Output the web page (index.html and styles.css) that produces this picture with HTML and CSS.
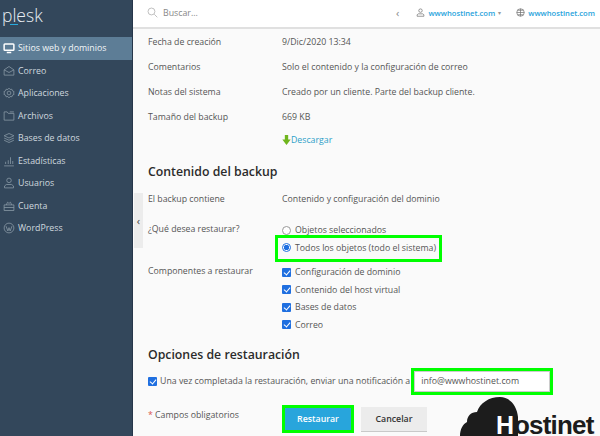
FILE: index.html
```html
<!DOCTYPE html>
<html lang="es">
<head>
    <meta charset="UTF-8">
    <title>Plesk - Restaurar backup</title>
    <link rel="stylesheet" href="styles.css">
</head>
<body>
    <aside class="sidebar">
        <div class="logo">plesk<span class="logo-bar"></span></div>
        <nav class="nav">
            <a class="nav-item active">
                <svg viewBox="0 0 16 16"><rect x="1.5" y="2.5" width="13" height="8.5" rx="1" fill="none" stroke-width="2"/><path d="M5 14h6" stroke-width="2"/></svg>
                Sitios web y dominios
            </a>
            <a class="nav-item">
                <svg viewBox="0 0 16 16"><path d="M1.5 6.5 8 2l6.5 4.500v7h-13zM1.5 6.500 8 10l6.500-3.500"/></svg>
                Correo
            </a>
            <a class="nav-item">
                <svg viewBox="0 0 16 16"><circle cx="8" cy="8" r="2.500"/><path d="M8 1.500l1.500 1.800 2.300-.3.900 2.200 2.100 1-.7 1.800.7 1.800-2.100 1-.9 2.200-2.300-.3L8 14.500l-1.500-1.800-2.300.3-.9-2.200-2.100-1 .7-1.800-.7-1.800 2.100-1 .9-2.200 2.300.3z"/></svg>
                Aplicaciones
            </a>
            <a class="nav-item">
                <svg viewBox="0 0 16 16"><path d="M1.500 2.500h4l1.500 2h7.500v9h-13zM9 2.500h5.500"/></svg>
                Archivos
            </a>
            <a class="nav-item">
                <svg viewBox="0 0 16 16"><path d="M8 2l6.500 3L8 8 1.500 5zM1.500 8 8 11l6.500-3M1.500 11 8 14l6.500-3"/></svg>
                Bases de datos
            </a>
            <a class="nav-item">
                <svg viewBox="0 0 16 16"><path d="M1.500 14.500h13M3.500 12V9M7 12V7M10 12V3M13 12V8"/></svg>
                Estadísticas
            </a>
            <a class="nav-item">
                <svg viewBox="0 0 16 16"><circle cx="8" cy="4.500" r="3"/><path d="M2 14.500v-2.500l2.500-2h7l2.500 2v2.500z"/></svg>
                Usuarios
            </a>
            <a class="nav-item">
                <svg viewBox="0 0 16 16"><path d="M1.500 6.500h13v7.500h-13zM1.500 10h13M4.500 6.500 6 3l2 1.500L10 3l1.500 3.500"/></svg>
                Cuenta
            </a>
            <a class="nav-item">
                <svg viewBox="0 0 16 16"><circle cx="8" cy="8" r="6.500"/><path d="M4 5.500 6.500 12 8 7.500 9.500 12 12 5.500"/></svg>
                WordPress
            </a>
        </nav>
    </aside>

    <div class="main">
        <header class="topbar">
            <svg class="search-icon" viewBox="0 0 16 16"><circle cx="6.500" cy="6.500" r="5"/><path d="M10.500 10.500 15 15"/></svg>
            <span class="search-text">Buscar...</span>
            <span class="top-chevron">‹</span>
            <svg class="top-icon" viewBox="0 0 12 12"><circle cx="6" cy="3.500" r="2.300"/><path d="M1.500 11V9l1.500-1.200h6L10.500 9v2z"/></svg>
            <a class="top-link">wwwhostinet.com</a>
            <span class="caret">▾</span>
            <svg class="top-icon globe" viewBox="0 0 12 12"><circle cx="6" cy="6" r="5"/><path d="M1 6h10M6 1v10M2.500 3h7M2.500 9h7"/></svg>
            <a class="top-link">wwwhostinet.com</a>
        </header>

        <div class="side-toggle">‹</div>

        <main class="content">
            <div class="row"><div class="label">Fecha de creación</div><div class="value">9/Dic/2020 13:34</div></div>
            <div class="row"><div class="label">Comentarios</div><div class="value">Solo el contenido y la configuración de correo</div></div>
            <div class="row"><div class="label">Notas del sistema</div><div class="value">Creado por un cliente. Parte del backup cliente.</div></div>
            <div class="row"><div class="label">Tamaño del backup</div><div class="value">669 KB</div></div>
            <div class="row download-row"><div class="label"></div><div class="value download">
                <svg viewBox="0 0 10 12"><path d="M3 0h4v5.500h3L5 12 0 5.500h3z"/></svg>
                <a>Descargar</a>
            </div></div>

            <h2 class="heading first">Contenido del backup</h2>
            <div class="row tight"><div class="label">El backup contiene</div><div class="value">Contenido y configuración del dominio</div></div>

            <div class="row restore">
                <div class="label">¿Qué desea restaurar?</div>
                <div class="value options">
                    <label class="option"><span class="radio"></span>Objetos seleccionados</label>
                    <label class="option"><span class="radio on"></span>Todos los objetos (todo el sistema)<span class="mark radio-mark"></span></label>
                </div>
            </div>

            <div class="row components">
                <div class="label">Componentes a restaurar</div>
                <div class="value options">
                    <label class="option"><span class="check"></span>Configuración de dominio</label>
                    <label class="option"><span class="check"></span>Contenido del host virtual</label>
                    <label class="option"><span class="check"></span>Bases de datos</label>
                    <label class="option"><span class="check"></span>Correo</label>
                </div>
            </div>

            <h2 class="heading second">Opciones de restauración</h2>
            <div class="notify">
                <span class="check"></span>
                <span class="notify-text">Una vez completada la restauración, enviar una notificación a</span>
                <span class="email">info@wwwhostinet.com</span>
            </div>

            <div class="actions">
                <div class="required"><span class="star">*</span> Campos obligatorios</div>
                <button class="btn primary">Restaurar</button>
                <button class="btn">Cancelar</button>
            </div>
        </main>
    </div>

    <div class="brand">
        <svg class="cloud" viewBox="0 0 60 39"><path d="M0 39C0 32 3 27 7 25 7 19 11 15 17 15 20 6 29 0 40 0 50 0 57 9 58 20V39z"/></svg>
        <span class="brand-h">H</span><span class="brand-rest">ostinet</span>
    </div>
</body>
</html>
```

FILE: styles.css
```css
* {
    box-sizing: border-box;
}

html, body {
    height: 100%;
}

body {
    margin: 0;
    display: flex;
    height: 436px;
    overflow: hidden;
    position: relative;
    background: #fafafa;
    font-family: "Open Sans", sans-serif;
    font-size: 8.750px;
    color: #555;
}

/* sidebar */
.sidebar {
    width: 133px;
    flex-shrink: 0;
    background: #33475b;
    border-right: 1px solid #26364a;
    color: #d5dde4;
}

.logo {
    position: relative;
    height: 37px;
    padding: 0 0 0 2px;
    font-size: 17.500px;
    font-weight: 300;
    line-height: 31px;
    color: #e8eef3;
}

.logo-bar {
    position: absolute;
    left: 10px;
    top: 24px;
    width: 8px;
    height: 1px;
    background: #28aade;
}

.nav-item {
    display: flex;
    align-items: center;
    gap: 3px;
    height: 22.500px;
    padding-left: 3px;
    font-size: 8.800px;
    color: #cfd8df;
}

.nav-item svg {
    width: 12px;
    height: 12px;
    fill: none;
    stroke: #8d9daa;
    stroke-width: 1;
}

.nav-item.active {
    background: #5d7d96;
    color: #f2f6f8;
}

.nav-item.active svg {
    stroke: #fff;
}

/* main */
.main {
    flex: 1;
    min-width: 0;
}

.topbar {
    display: flex;
    align-items: center;
    height: 29px;
    padding: 0 5px 2px 14px;
    background: #fff;
    border-bottom: 2px solid #e0e0e0;
}

.search-icon {
    width: 11px;
    height: 11px;
    fill: none;
    stroke: #a5a5a5;
    stroke-width: 1;
}

.search-text {
    margin-left: 5px;
    font-size: 8.800px;
    color: #888;
    flex: 1;
}

.top-chevron {
    margin-right: 17px;
    color: #888;
    font-size: 11px;
}

.top-icon {
    width: 9px;
    height: 9px;
    margin-right: 3px;
    fill: none;
    stroke: #777;
    stroke-width: 1;
}

.top-icon.globe {
    margin-left: 15px;
    margin-right: 3px;
}

.top-link {
    font-size: 7.600px;
    font-weight: 600;
    color: #29a3dc;
}

.caret {
    margin-left: 3px;
    color: #999;
    font-size: 6px;
}

.side-toggle {
    position: absolute;
    left: 134px;
    top: 193px;
    width: 9px;
    height: 55px;
    display: flex;
    align-items: center;
    justify-content: center;
    background: #ececec;
    color: #444;
    font-size: 11px;
}

.content {
    padding: 5px 0 0 15px;
}

.row {
    display: flex;
    min-height: 25px;
    padding-top: 1px;
    line-height: 14px;
}

.row.download-row {
    min-height: 24px;
}

.label {
    width: 134px;
    flex-shrink: 0;
}

.download {
    display: flex;
    align-items: center;
    gap: 0;
    height: 10px;
}

.download svg {
    width: 9px;
    height: 10px;
    fill: #6fb51d;
}

.download a {
    color: #2d9fc8;
}

.heading {
    margin: 0;
    font-size: 12.300px;
    font-weight: 600;
    color: #2b2b2b;
    line-height: 18px;
}

.heading.first {
    margin-top: 5px;
    margin-bottom: 10px;
}

.heading.second {
    margin-top: 12.500px;
    margin-bottom: 7px;
}

.row.tight {
    min-height: 29.500px;
}

.row.restore {
    min-height: 42px;
}

.options {
    display: flex;
    flex-direction: column;
}

.option {
    position: relative;
    display: flex;
    align-items: center;
    height: 17.500px;
}

.radio {
    width: 9px;
    height: 9px;
    margin-right: 4px;
    border: 1px solid #999;
    border-radius: 50%;
    background: #fff;
}

.radio.on {
    border-color: #1f6fe0;
    background: radial-gradient(circle, #1f6fe0 0 2.500px, #fff 3px);
}

.check {
    position: relative;
    display: inline-block;
    flex-shrink: 0;
    width: 9px;
    height: 9px;
    margin-right: 4px;
    border-radius: 1px;
    background: #1f6fe0;
}

.check::after {
    content: "";
    position: absolute;
    left: 3px;
    top: 1px;
    width: 3px;
    height: 5px;
    border: solid #fff;
    border-width: 0 1.500px 1.500px 0;
    transform: rotate(40deg);
}

.mark {
    position: absolute;
    border: 3px solid #0f0;
}

.radio-mark {
    left: -7px;
    top: -4px;
    width: 167px;
    height: 27px;
}

.notify {
    display: flex;
    align-items: center;
    height: 20px;
}

.notify .check {
    margin-right: 3px;
}

.email {
    flex-shrink: 0;
    width: 142px;
    height: 27px;
    margin-left: 1px;
    padding: 0 0 0 7px;
    display: flex;
    align-items: center;
    background: #fff;
    border: 3px solid #0f0;
    box-shadow: inset 0 0 0 1px #ccc;
    color: #555;
    font-size: 8.800px;
}

.actions {
    display: flex;
    align-items: flex-start;
    margin-top: 14px;
}

.required {
    width: 134px;
    padding-top: 4px;
}

.star {
    color: #d9534f;
}

.btn {
    height: 25px;
    margin-top: 2px;
    margin-right: 6px;
    padding: 0;
    width: 66px;
    border: 0;
    border-bottom: 1px solid #c9c9c9;
    background: #ececec;
    color: #333;
    font-family: inherit;
    font-size: 8.800px;
    font-weight: 600;
}

.btn.primary {
    width: 72px;
    height: 28px;
    margin-top: 0;
    margin-right: 7px;
    background: #28a5dc;
    border: 3px solid #0f0;
    color: #fff;
}

/* marca de agua */
.brand {
    position: absolute;
    left: 460px;
    top: 397px;
    width: 140px;
    height: 39px;
}

.cloud {
    position: absolute;
    left: 0;
    top: 0;
    width: 60px;
    height: 39px;
    fill: #1c1c1c;
}

.brand-h {
    position: absolute;
    left: 36px;
    bottom: 0;
    font-family: "Liberation Sans", sans-serif;
    font-size: 25px;
    font-weight: 700;
    color: #fff;
    line-height: 22px;
}

.brand-rest {
    position: absolute;
    left: 54px;
    bottom: 0;
    font-family: "Liberation Sans", sans-serif;
    font-size: 26px;
    font-weight: 700;
    color: #1c1c1c;
    line-height: 22px;
    letter-spacing: -0.800px;
}
```
